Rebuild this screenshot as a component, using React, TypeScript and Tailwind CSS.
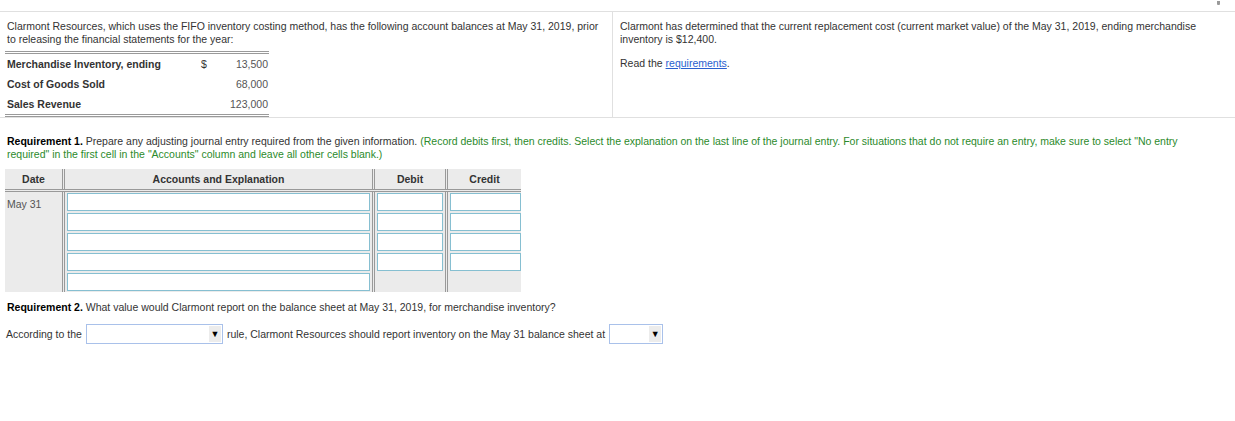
import React from 'react';

const balances = [
  { label: 'Merchandise Inventory, ending', sign: '$', amount: '13,500' },
  { label: 'Cost of Goods Sold', sign: '', amount: '68,000' },
  { label: 'Sales Revenue', sign: '', amount: '123,000' },
];

function Cell({ w }: { w: string }) {
  return <div className={`h-[18px] ${w} bg-white border border-[#86bfd1]`} />;
}

function Select({ w }: { w: string }) {
  return (
    <div className={`${w} h-[20px] bg-white border border-[#a9c1ea] flex justify-end items-center pr-[1px]`}>
      <div className="h-[16px] w-[12px] bg-[#ececec] flex items-center justify-center text-[9px] text-black leading-none">
        ▼
      </div>
    </div>
  );
}

export default function App() {
  return (
    <div
      className="w-[1235px] h-[421px] bg-white text-[#333] text-[10.5px] leading-[13px] relative"
      style={{ fontFamily: '"Liberation Sans", Arial, sans-serif' }}
    >
      {/* little corner icon, cut off by the top edge */}
      <div className="absolute right-[13px] top-0 w-[7px] h-[5px] flex items-end justify-center">
        <div className="w-[3px] h-[4px] bg-[#9a9a9a] rounded-b-[1px]" />
      </div>

      <div className="pt-[11px]">
        <div className="flex border-t border-b border-[#e0e0e0] h-[107px]">
          {/* left: problem data */}
          <div className="w-[612px] pl-[7px] pt-[8px]">
            <p>
              Clarmont Resources, which uses the FIFO inventory costing method, has the following account balances at May 31,
              2019, prior
              <br />
              to releasing the financial statements for the year:
            </p>
            <div className="ml-[-2px] w-[264px] mt-[5px] border-t-[3px] border-b-[3px] border-double border-[#9a9a9a]">
              {balances.map((b) => (
                <div key={b.label} className="flex items-center h-[20px] first:pt-[1px]">
                  <span className="pl-[2px] font-bold w-[196px]">{b.label}</span>
                  <span className="w-[20px]">{b.sign}</span>
                  <span className="flex-1 text-right pr-[1px] text-[#555]">{b.amount}</span>
                </div>
              ))}
            </div>
          </div>

          {/* right: extra info */}
          <div className="flex-1 border-l border-[#e0e0e0] pl-[7px] pt-[8px]">
            <p>
              Clarmont has determined that the current replacement cost (current market value) of the May 31, 2019, ending
              merchandise
              <br />
              inventory is $12,400.
            </p>
            <p className="mt-[11px]">
              Read the <span className="text-[#2a5fcf] underline">requirements</span>.
            </p>
          </div>
        </div>
      </div>

      {/* requirement 1 */}
      <div className="pl-[7px] pt-[17px] pr-[50px]">
        <p>
          <span className="font-bold text-black">Requirement 1.</span> Prepare any adjusting journal entry required from the
          given information.{' '}
          <span className="text-[#2b8a2b]">
            (Record debits first, then credits. Select the explanation on the last line of the journal entry. For situations
            that do not require an entry, make sure to select "No entry required" in the first cell in the "Accounts" column
            and leave all other cells blank.)
          </span>
        </p>
      </div>

      <div className="ml-[5px] mt-[8px] w-[516px] bg-[#ebebeb]">
        <div className="flex h-[23px] border-b-[3px] border-double border-[#999] font-bold items-stretch">
          <div className="w-[57px] flex items-center justify-center">Date</div>
          <div className="w-[310px] border-l-[3px] border-double border-[#999] flex items-center justify-center">
            Accounts and Explanation
          </div>
          <div className="w-[73px] border-l-[3px] border-double border-[#999] flex items-center justify-center">Debit</div>
          <div className="w-[76px] border-l-[3px] border-double border-[#999] flex items-center justify-center">Credit</div>
        </div>
        <div className="flex">
          <div className="w-[57px] pl-[2px] pt-[6px] text-[#555]">May 31</div>
          <div className="w-[310px] border-l-[3px] border-double border-[#999] px-[2px] pt-[1px] pb-[1px] flex flex-col gap-[2px]">
            <Cell w="w-[303px]" />
            <Cell w="w-[303px]" />
            <Cell w="w-[303px]" />
            <Cell w="w-[303px]" />
            <Cell w="w-[303px]" />
          </div>
          <div className="w-[73px] border-l-[3px] border-double border-[#999] px-[2px] pt-[1px] flex flex-col gap-[2px]">
            <Cell w="w-[66px]" />
            <Cell w="w-[66px]" />
            <Cell w="w-[66px]" />
            <Cell w="w-[66px]" />
          </div>
          <div className="w-[76px] border-l-[3px] border-double border-[#999] px-[2px] pt-[1px] flex flex-col gap-[2px]">
            <Cell w="w-[71px]" />
            <Cell w="w-[71px]" />
            <Cell w="w-[71px]" />
            <Cell w="w-[71px]" />
          </div>
        </div>
      </div>

      {/* requirement 2 */}
      <div className="pl-[7px] pt-[9px]">
        <p>
          <span className="font-bold text-black">Requirement 2.</span> What value would Clarmont report on the balance sheet at
          May 31, 2019, for merchandise inventory?
        </p>
        <div className="flex items-center gap-[4px] mt-[10px] ml-[-1px]">
          <span>According to the</span>
          <Select w="w-[137px]" />
          <span>rule, Clarmont Resources should report inventory on the May 31 balance sheet at</span>
          <Select w="w-[54px]" />
        </div>
      </div>
    </div>
  );
}
